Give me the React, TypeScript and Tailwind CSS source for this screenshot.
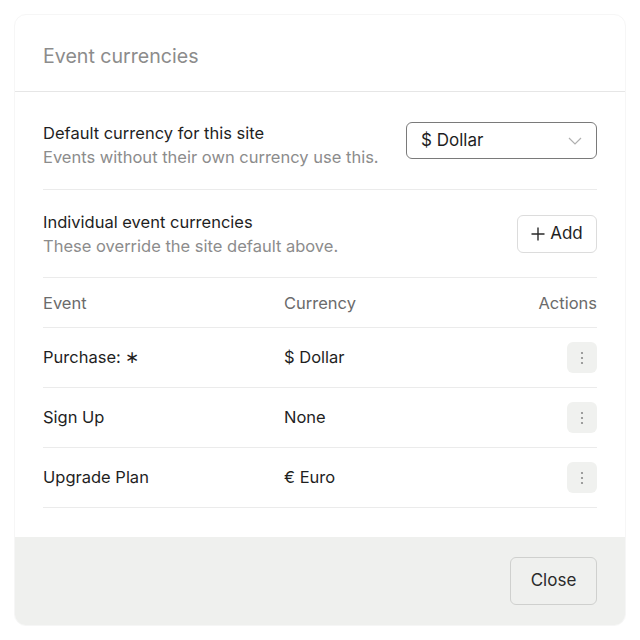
import React from "react";

const rows = [
  { event: "Purchase: ∗", currency: "$ Dollar" },
  { event: "Sign Up", currency: "None" },
  { event: "Upgrade Plan", currency: "€ Euro" },
];

function Dots() {
  return (
    <svg width="4" height="14" viewBox="0 0 4 14" fill="#8a8a8a">
      <circle cx="2" cy="2" r="1.1" />
      <circle cx="2" cy="7" r="1.1" />
      <circle cx="2" cy="12" r="1.1" />
    </svg>
  );
}

export default function App() {
  return (
    <div
      className="w-[640px] h-[640px] bg-white p-[14px]"
      style={{ fontFamily: "Inter, 'Noto Sans', sans-serif" }}
    >
      <div className="w-[612px] rounded-[12px] border border-[#f6f6f6] overflow-hidden flex flex-col bg-white">
        <div className="h-[77px] flex items-start pt-[28px] px-[28px] border-b border-[#e6e6e6]">
          <span className="text-[19.6px] leading-[26px] text-[#8c8c8c]">Event currencies</span>
        </div>
        <div className="px-[28px] pt-[9px] pb-[29px]">
          <div className="flex items-start justify-between py-5 border-b border-[#ebebeb]">
            <div className="flex flex-col">
              <span className="text-[16.5px] leading-[24px] text-[#1f1f1f]">Default currency for this site</span>
              <span className="text-[16.5px] leading-[24px] text-[#8c8c8c]">Events without their own currency use this.</span>
            </div>
            <div className="w-[191px] h-[37px] border border-[#7a7a7a] rounded-[6px] flex items-center justify-between pl-[14px] pr-[14px] mt-[1px]">
              <span className="text-[17px] text-[#1f1f1f]">$ Dollar</span>
              <svg width="14" height="8" viewBox="0 0 14 8" fill="none" stroke="#b0b0b0" strokeWidth="1.2">
                <path d="M1 1l6 6 6-6" />
              </svg>
            </div>
          </div>
          <div className="flex items-center justify-between pt-5 pb-[19px] border-b border-[#ebebeb]">
            <div className="flex flex-col">
              <span className="text-[16.5px] leading-[24px] text-[#1f1f1f]">Individual event currencies</span>
              <span className="text-[16.5px] leading-[24px] text-[#8c8c8c]">These override the site default above.</span>
            </div>
            <div className="w-[80px] h-[38px] border border-[#dcdcdc] rounded-[6px] flex items-center justify-center gap-[5px]">
              <svg width="14" height="14" viewBox="0 0 14 14" fill="none" stroke="#2a2a2a" strokeWidth="1.4">
                <path d="M7 0.5v13M0.5 7h13" />
              </svg>
              <span className="text-[17px] text-[#1f1f1f]">Add</span>
            </div>
          </div>
          <div className="grid grid-cols-[241px_1fr_auto] items-center h-[50px] pt-[2px] border-b border-[#ebebeb] text-[16.5px] text-[#6b6b6b]">
            <span>Event</span>
            <span>Currency</span>
            <span>Actions</span>
          </div>
          {rows.map((r) => (
            <div
              key={r.event}
              className="grid grid-cols-[241px_1fr_auto] items-center h-[60px] border-b border-[#ebebeb] text-[16.5px] text-[#1f1f1f]"
            >
              <span>{r.event}</span>
              <span>{r.currency}</span>
              <div className="w-[30px] h-[31px] rounded-[6px] bg-[#f0f1ef] flex items-center justify-center">
                <Dots />
              </div>
            </div>
          ))}
        </div>
        <div className="h-[88px] bg-[#eff0ee] flex items-center justify-end px-[28px]">
          <div className="w-[87px] h-[48px] border border-[#cfd0ce] rounded-[6px] flex items-center justify-center">
            <span className="text-[17px] text-[#2a2a2a]">Close</span>
          </div>
        </div>
      </div>
    </div>
  );
}
